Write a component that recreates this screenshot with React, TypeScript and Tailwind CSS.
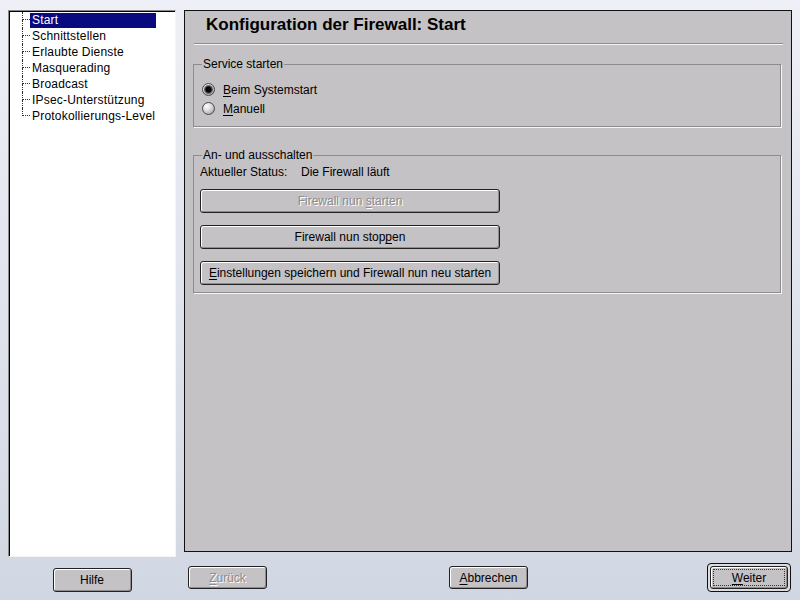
import React from "react";

const font = { fontFamily: '"Liberation Sans", Arial, sans-serif' };

function U({ children }: { children: React.ReactNode }) {
  return <span className="underline underline-offset-[2px]">{children}</span>;
}

const btn =
  "flex items-center justify-center bg-[#c4c2c5] border border-[#222] rounded-[3px] shadow-[inset_1px_1px_0_#fff,inset_-1px_-1px_0_#8e8c8f] text-[12px]";

function Radio({ checked, children }: { checked?: boolean; children: React.ReactNode }) {
  return (
    <div className="flex items-center h-[19px]">
      <div className="w-[13px] h-[13px] rounded-full border border-[#4a4a4a] bg-[radial-gradient(circle_at_35%_30%,#ffffff,#d8d8d8_45%,#8a8a8a)] flex items-center justify-center">
        {checked && (
          <div className="w-[9px] h-[9px] rounded-full bg-[radial-gradient(circle,#000_0,#000_40%,#555_55%,#9a9a9a_100%)]" />
        )}
      </div>
      <span className="ml-[8px] text-[12px]">{children}</span>
    </div>
  );
}

const items = [
  "Start",
  "Schnittstellen",
  "Erlaubte Dienste",
  "Masquerading",
  "Broadcast",
  "IPsec-Unterstützung",
  "Protokollierungs-Level",
];

export default function App() {
  return (
    <div
      className="w-[800px] h-[600px] overflow-hidden bg-linear-to-b from-[#eff0f7] to-[#d1d7e2] text-black"
      style={font}
    >
      <div className="flex flex-row pl-[8px] pt-[10px] gap-[8px]">
        {/* Left column */}
        <div className="w-[168px] flex flex-col">
          <div className="h-[547px] bg-white border border-t-[#8a8a8a] border-l-[#8a8a8a] border-r-[#f4f4f4] border-b-[#f4f4f4] shadow-[inset_1px_1px_0_#000] pt-[1px]">
            {items.map((it, i) => {
              const last = i === items.length - 1;
              return (
                <div key={it} className="flex flex-row h-[16px]">
                  <div className="w-[13px]" />
                  <div className="w-[8px] flex flex-col">
                    <div className="h-[8px] border-l border-b border-dotted border-[#333]" />
                    <div className={"h-[8px] " + (last ? "" : "border-l border-dotted border-[#333]")} />
                  </div>
                  <div
                    className={
                      "w-[126px] pl-[2px] text-[12px] tracking-[0.2px] leading-[15px] h-[15px] mt-[1px] " +
                      (i === 0 ? "bg-[#0a0a80] text-white" : "")
                    }
                  >
                    {it}
                  </div>
                </div>
              );
            })}
          </div>
          <button className={btn + " text-black self-center mt-[11px] w-[79px] h-[24px]"}>Hilfe</button>
        </div>

        {/* Right column */}
        <div className="w-[608px] flex flex-col">
          <div className="h-[542px] bg-[#c4c2c5] border border-[#111] flex flex-col px-[8px]">
            <div className="ml-[13px] mt-[4px] h-[20px] leading-[20px] text-[17px] font-bold">
              Konfiguration der Firewall: Start
            </div>
            <div className="mt-[8px] ml-[1px] border-t border-t-[#8d8b8e] border-b border-b-[#f6f6f6]" />

            <fieldset className="mt-[12px] mr-[2px] border border-[#8d8b8e] shadow-[1px_1px_0_#f6f6f6] px-[8px] pb-[8px]">
              <legend className="px-[1px] text-[12px] leading-[14px]">Service starten</legend>
              <div className="mt-[9px] flex flex-col">
                <Radio checked>
                  <U>B</U>eim Systemstart
                </Radio>
                <Radio>
                  <U>M</U>anuell
                </Radio>
              </div>
            </fieldset>

            <fieldset className="mt-[21px] mr-[2px] border border-[#8d8b8e] shadow-[1px_1px_0_#f6f6f6] px-[6px] pb-[7px]">
              <legend className="ml-[2px] px-[1px] text-[12px] leading-[14px]">An- und ausschalten</legend>
              <div className="mt-[2px] h-[16px] flex flex-row items-center text-[12px]">
                <span className="w-[101px]">Aktueller Status:</span>
                <span>Die Firewall läuft</span>
              </div>
              <div className="flex flex-col gap-[12px] mt-[9px]">
                <button className={btn + " w-[300px] h-[24px] text-[#8e8c8f] [text-shadow:1px_1px_0_#fff]"}>
                  <span>
                    Firewall nun <U>s</U>tarten
                  </span>
                </button>
                <button className={btn + " text-black w-[300px] h-[24px]"}>
                  <span>
                    Firewall nun stop<U>p</U>en
                  </span>
                </button>
                <button className={btn + " text-black w-[300px] h-[24px]"}>
                  <span>
                    <U>E</U>instellungen speichern und Firewall nun neu starten
                  </span>
                </button>
              </div>
            </fieldset>
          </div>

          <div className="flex flex-row items-start mt-[11px]">
            <button
              className={btn + " ml-[4px] mt-[3px] w-[79px] h-[23px] text-[#8e8c8f] [text-shadow:1px_1px_0_#fff]"}
            >
              <span>
                <U>Z</U>urück
              </span>
            </button>
            <button className={btn + " text-black ml-[182px] mt-[3px] w-[79px] h-[23px]"}>
              <span>
                <U>A</U>bbrechen
              </span>
            </button>
            <div className="ml-auto mr-[1px] p-[2px] border border-[#111] rounded-[4px] bg-[#dcdcdc]">
              <button className={btn + " text-black w-[78px] h-[23px] p-[2px]"}>
                <span className="w-full h-full border border-dotted border-[#333] flex items-center justify-center">
                  <span>
                    <U>W</U>eiter
                  </span>
                </span>
              </button>
            </div>
          </div>
        </div>
      </div>
    </div>
  );
}
